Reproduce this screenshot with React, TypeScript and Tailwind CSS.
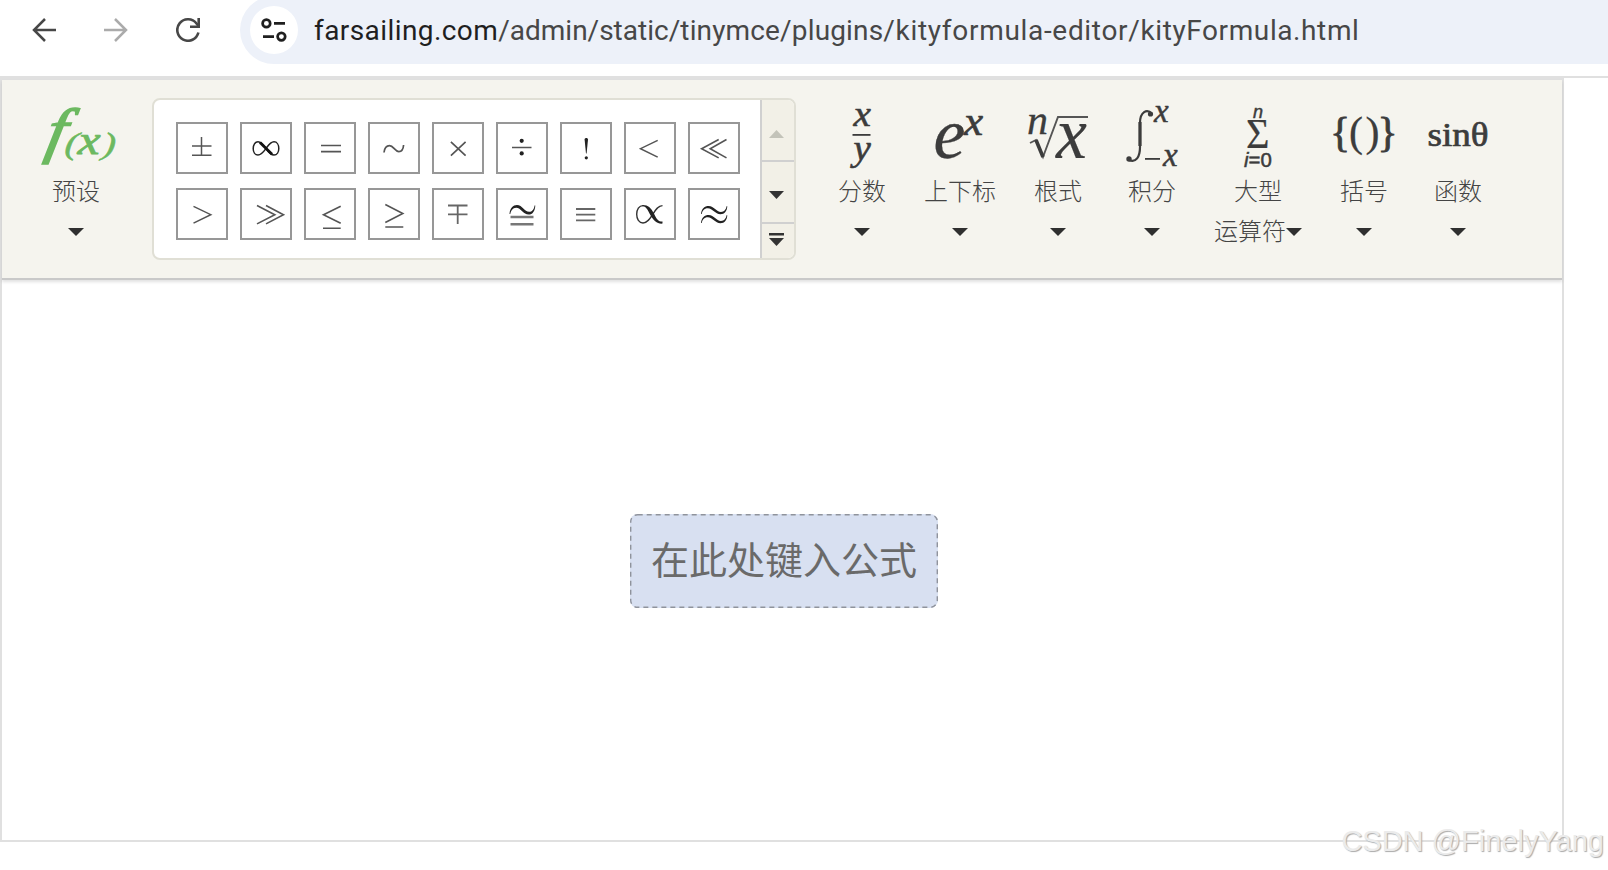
import React from 'react';
import clsx from 'clsx';

interface MenuItem {
  label: string;
  second?: string;
  width: string;
  icon: React.ReactNode;
}

const Icon = ({ children }: { children: React.ReactNode }) => (
  <svg viewBox="-48 0 96 72" className="w-24 h-[72px] shrink-0 overflow-visible" fill="#3c3c3c" fontFamily="Liberation Serif, serif" fontStyle="italic">
    {children}
  </svg>
);

interface GlyphProps extends React.SVGProps<SVGTextElement> {
  at: [number, number];
  stretch?: number;
  slant?: number;
  size: number;
  weight?: number;
  children: React.ReactNode;
}

// a letter stretched sideways, thickened with a stroke of its own colour
const Glyph = ({ at, stretch = 1, slant = 0, size, weight = 0.8, children, ...rest }: GlyphProps) => (
  <text
    transform={`translate(${at[0]} ${at[1]}) skewX(${-slant}) scale(${stretch} 1)`}
    fontSize={size}
    stroke="#3c3c3c"
    strokeWidth={weight}
    {...rest}
  >
    {children}
  </text>
);

const menus: MenuItem[] = [
  {
    label: '分数',
    width: 'w-[94px]',
    icon: (
      <Icon>
        <Glyph at={[-8.5, 26]} size={35} stretch={1.12} weight={0.6}>x</Glyph>
        <rect x="-9.5" y="34" width="18" height="1.8" />
        <Glyph at={[-8.5, 60]} size={36} stretch={1.08} weight={0.6}>y</Glyph>
      </Icon>
    ),
  },
  {
    label: '上下标',
    width: 'w-[102px]',
    icon: (
      <Icon>
        <Glyph at={[-26.5, 58]} size={72} weight={0.3}>e</Glyph>
        <Glyph at={[4, 34.5]} size={43} weight={0.7}>x</Glyph>
      </Icon>
    ),
  },
  {
    label: '根式',
    width: 'w-[94px]',
    icon: (
      <Icon>
        <Glyph at={[-31, 34]} size={42} weight={0.3}>n</Glyph>
        <path d="M-28 43L-22 40L-15 57L0 17H30" fill="none" stroke="#555" strokeWidth="1.9" />
        <path d="M-22 40L-15 57" stroke="#3c3c3c" strokeWidth="3.6" />
        <Glyph at={[-2, 58]} size={74} stretch={0.94} weight={0.2}>x</Glyph>
      </Icon>
    ),
  },
  {
    label: '积分',
    width: 'w-[94px]',
    icon: (
      <Icon>
        <path
          d="M0 14C-5 8 -12 12 -12 23V47C-12 57 -16 63 -23 60"
          fill="none"
          stroke="#3c3c3c"
          strokeWidth="2.2"
        />
        <path d="M-12 22V46" stroke="#3c3c3c" strokeWidth="3.2" />
        <circle cx="-1.5" cy="14" r="2.6" />
        <circle cx="-23" cy="59" r="2.7" />
        <Glyph at={[2, 22]} size={33} weight={0.5}>x</Glyph>
        <rect x="-7" y="58" width="15" height="1.8" />
        <Glyph at={[11, 66]} size={33} weight={0.5}>x</Glyph>
      </Icon>
    ),
  },
  {
    label: '大型',
    second: '运算符',
    width: 'w-[118px]',
    icon: (
      <Icon>
        <Glyph at={[-5, 17.5]} size={18} fontFamily="Liberation Sans, sans-serif" weight={0.5}>n</Glyph>
        <Glyph at={[-12, 48]} size={42} stretch={0.96} fontStyle="normal" weight={0.2}>Σ</Glyph>
        <Glyph at={[-14, 66.5]} size={20} stretch={1.02} weight={0.5} fontFamily="Liberation Sans, sans-serif">
          i<tspan fontStyle="normal">=0</tspan>
        </Glyph>
      </Icon>
    ),
  },
  {
    label: '括号',
    width: 'w-[94px]',
    icon: (
      <Icon>
        <g fontStyle="normal">
          <Glyph at={[-34, 45.5]} size={42}>{'{'}</Glyph>
          <Glyph at={[-15, 45.5]} size={42} weight={0.3}>(</Glyph>
          <Glyph at={[1.5, 45.5]} size={42} weight={0.3}>)</Glyph>
          <Glyph at={[13.5, 45.5]} size={42}>{'}'}</Glyph>
        </g>
      </Icon>
    ),
  },
  {
    label: '函数',
    width: 'w-[94px]',
    icon: (
      <Icon>
        <text x="-30.5" y="46" fontSize="33" fontStyle="normal" textLength="61" lengthAdjust="spacingAndGlyphs" stroke="#3c3c3c" strokeWidth="0.7">sinθ</text>
      </Icon>
    ),
  },
];

const line = (d: string, width = 1.5, color = '#555') => (
  <path d={d} fill="none" stroke={color} strokeWidth={width} />
);

const wave = (x: number, y: number, w: number, h: number) => (
  <path
    transform={`translate(${x} ${y}) scale(${w} ${h})`}
    d="M0 .95C.02 .3 .14 0 .29 0C.5 0 .58 .72 .76 .72C.88 .72 .96 .4 .97 .04L1 .04C.99 .6 .9 1 .74 1C.54 1 .44 .28 .26 .28C.12 .28 .05 .6 .03 .95Z"
    fill="#222"
  />
);

const symbols: React.ReactNode[] = [
  line('M16 24H35.5M25.5 15V33M16 33.3H35.5'),
  <>
    <path d="M26 26.5C22 20.5 20 19.8 18 19.8C15 19.8 13.2 23 13.2 26.5C13.2 30 15 33 18 33C21.5 33 23.5 30 26 26.5C28.5 23 30.5 19.8 34 19.8C37 19.8 38.8 23 38.8 26.5C38.8 30 37 33 34 33C31.5 33 29 31 26 26.5Z" fill="none" stroke="#222" strokeWidth="1.5" />
    <path d="M20 20.5L32 32.3" stroke="#111" strokeWidth="2.8" />
  </>,
  line('M17 23.5H37M17 29.7H37', 1.7),
  line('M16 30.5C16.5 26 18.5 23.6 21.5 23.6C25.5 23.6 27 29.6 30.8 29.6C33.6 29.6 35.3 27 35.6 23', 1.7),
  line('M18.9 19.9L33.6 33.6M33.6 19.9L18.9 33.6', 1.7),
  <>
    {line('M16 25.4H35.5')}
    <circle cx="25.7" cy="18.8" r="2.1" />
    <circle cx="25.7" cy="31.4" r="2.1" />
  </>,
  <>
    <path d="M24.6 17.5C24.6 15.5 28 15.5 28 17.5L26.6 31.5H26Z" />
    <circle cx="26.3" cy="35.8" r="1.6" />
  </>,
  line('M33.7 18.3L16.5 26.7L33.7 35.2'),
  line('M30.7 17.5L13.6 26.7L30.7 35.9M38.5 17.5L22.2 26.7L38.5 35.9', 1.6),
  line('M17.5 18.3L34.8 26.7L17.5 35.2'),
  line('M17 17.5L34.8 26.7L17 35.9M26 17.5L43.5 26.7L26 35.9', 1.6),
  line('M36.7 18.3L19.5 26.7L36.7 35.2M19 40.3H36.7', 1.6),
  line('M17.3 16.5L34.8 25.5L17.3 34.5M17.3 39H35.3', 1.6),
  line('M16 17.5H35.5M16 26.4H35.5M25.7 17.5V36', 1.8, '#666'),
  <>
    {wave(13.5, 17, 25.8, 9.5)}
    {line('M14.5 29H37.5M14.5 36.3H37.5', 2.4, '#777')}
  </>,
  line('M16 21H35.3M16 26.7H35.3M16 32.3H35.3', 1.8, '#666'),
  <>
    {line('M38.5 17.6C30 17.6 27.5 35 19 35C15 35 12.7 31 12.7 26.3C12.7 21.5 15 17.6 19 17.6', 1.4, '#333')}
    <path d="M18.5 17C24 16.8 26.6 19.5 29.8 25.2C32.6 31 34 33.6 38.5 33.6V35.6C33 36 29.6 33 26.2 26.8C23.3 20.9 22 18.4 18.5 18.2Z" />
  </>,
  <>
    {wave(13, 18, 26.3, 8.3)}
    {wave(13, 27, 26.3, 8.3)}
  </>,
];

const Arrow = () => (
  <svg viewBox="0 0 16 8" className="w-4 h-2 shrink-0" fill="#2f2f2f">
    <path d="M0 0H16L8 8Z" />
  </svg>
);

const MenuButton = ({ label, second, width, icon }: MenuItem) => (
  <button className={clsx('flex flex-col items-center pt-5 shrink-0 whitespace-nowrap', width)}>
    {icon}
    <span className="h-10 leading-9">{label}</span>
    <span className="h-10 flex items-center">
      {second && <span className="h-10 leading-9">{second}</span>}
      <Arrow />
    </span>
  </button>
);

const BrowserBar = () => (
  <header className="h-[76px] flex items-start overflow-hidden">
    <nav className="w-60 h-15 flex items-center pl-8 gap-12 shrink-0" aria-label="Navigation">
      <svg viewBox="0 0 24 24" className="w-6 h-6" fill="none" stroke="#474747" strokeWidth="2.5">
        <path d="M24 12H2M13 1L2 12L13 23" />
      </svg>
      <svg viewBox="0 0 24 24" className="w-6 h-6" fill="none" stroke="#ababab" strokeWidth="2.5">
        <path d="M0 12H22M11 1L22 12L11 23" />
      </svg>
      <svg viewBox="0 0 24 24" className="w-6 h-6" fill="none" stroke="#474747" strokeWidth="2.6">
        <path d="M22.4 14.5A10.7 10.7 0 1 1 20.5 5.5L22.5 8" />
        <path d="M22.7 0V8.7H14" />
      </svg>
    </nav>
    <div className="flex-1 h-[68px] -mt-1 pt-1 bg-[#edf1f9] rounded-l-[34px] flex items-start">
      <div className="w-12 h-12 mt-1.5 ml-2.5 rounded-full bg-white flex items-center justify-center shrink-0">
        <svg viewBox="0 0 26 24" className="w-[26px] h-6" fill="none" stroke="#1f1f1f" strokeWidth="2.7">
          <circle cx="5.4" cy="5.4" r="3.8" />
          <path d="M13 5.4H24M2 18.6H13" />
          <circle cx="20.4" cy="18.6" r="3.8" />
        </svg>
      </div>
      <p className="ml-4 h-15 leading-[62px] text-[28px] font-[Roboto,sans-serif] whitespace-nowrap text-[#474747]">
        <span className="text-[#1f1f1f] tracking-[0.42px]">farsailing.com</span>
        <span>/admin/static</span>
        <span className="tracking-[0.15px]">/tinymce/plugins</span>
        <span className="tracking-[0.69px]">/kityformula-editor</span>
        <span className="tracking-[0.6px]">/kityFormula.html</span>
      </p>
    </div>
  </header>
);

const SymbolPanel = () => (
  <div className="w-[644px] h-[162px] mt-[18px] ml-0.5 shrink-0 flex bg-white border-2 border-[#e0dfd5] rounded-lg overflow-hidden">
    <div className="flex-1 grid grid-cols-[repeat(9,52px)] auto-rows-[52px] gap-x-3 gap-y-3.5 pl-[22px] pt-[22px]">
      {symbols.map((symbol, i) => (
        <button key={i} className="w-[52px] h-[52px] border-2 border-[#979797]">
          <svg viewBox="2 2 48 48" className="w-12 h-12" fill="#222">{symbol}</svg>
        </button>
      ))}
    </div>
    <div className="w-[34px] border-l-2 border-[#d0d0d0] bg-[#f2f0e7] flex flex-col">
      <button className="h-[62px] pt-[7px] pr-[3px] border-b-2 border-[#d0d0d0] flex items-center justify-center">
        <svg viewBox="0 0 15 8" className="w-[15px] h-2" fill="#c3c3b9"><path d="M7.5 0L15 8H0Z" /></svg>
      </button>
      <button className="h-[62px] pt-1.5 pr-[3px] border-b-2 border-[#d0d0d0] flex items-center justify-center">
        <svg viewBox="0 0 15 8" className="w-[15px] h-2" fill="#333"><path d="M0 0H15L7.5 8Z" /></svg>
      </button>
      <button className="flex-1 pb-[3px] pr-[3px] flex items-center justify-center">
        <svg viewBox="0 0 15 13" className="w-[15px] h-[13px]" fill="#333"><path d="M0 0H15V2.4H0ZM0 5H15L7.5 13Z" /></svg>
      </button>
    </div>
  </div>
);

export default function App() {
  return (
    <div className="relative w-full h-[870px] overflow-hidden bg-white">
      <BrowserBar />
      <div className="h-0.5 bg-[#e0e0e0]" />
      <main className="w-[1564px] h-[764px] border-2 border-[#e0e0e0] flex flex-col">
        <div className="h-50 shrink-0 flex items-start bg-[#f5f4ee] border-b-2 border-[#c9c9c9] shadow-[0_2px_3px_rgba(0,0,0,0.12)] text-2xl font-light text-[#444] font-['Noto_Sans_CJK_SC',sans-serif]">
          <MenuButton
            label="预设"
            width="w-[148px]"
            icon={
              <Icon>
                <g fill="#6cb960">
                  <Glyph at={[-32, 50.5]} size={61} stretch={1.15} slant={11} weight={1.5} stroke="#6cb960">f</Glyph>
                  <Glyph at={[-12, 54]} size={31} stretch={1.3} slant={6} weight={0.5} stroke="#6cb960">(</Glyph>
                  <Glyph at={[1.5, 54]} size={41} stretch={1.2} slant={4} weight={0.9} stroke="#6cb960">x</Glyph>
                  <Glyph at={[25.5, 54]} size={31} stretch={1.3} slant={6} weight={0.5} stroke="#6cb960">)</Glyph>
                </g>
              </Icon>
            }
          />
          <SymbolPanel />
          <div className="flex ml-[19px]">
            {menus.map((menu) => (
              <MenuButton key={menu.label} {...menu} />
            ))}
          </div>
        </div>
        <div className="flex-1 flex justify-center pt-[234px] pl-1">
          <div className="relative w-[308px] h-[94px] rounded-lg bg-[#d8e0f1] text-[38px] leading-[87px] text-center text-[#6a6a6a] font-normal font-['Noto_Sans_CJK_SC',sans-serif]">
            在此处键入公式
            <svg viewBox="0 0 308 94" className="absolute inset-0 w-full h-full" fill="none">
              <rect x="0.7" y="0.7" width="306.6" height="92.6" rx="7" stroke="#8f939c" strokeWidth="1.4" strokeDasharray="5 4" />
            </svg>
          </div>
        </div>
      </main>
      <div className="absolute right-1 bottom-[11px] text-[29px] leading-9 whitespace-nowrap text-[#ebebeb] [text-shadow:1px_1px_1px_#aaa] font-['Liberation_Sans',sans-serif]">
        CSDN @FinelyYang
      </div>
    </div>
  );
}
